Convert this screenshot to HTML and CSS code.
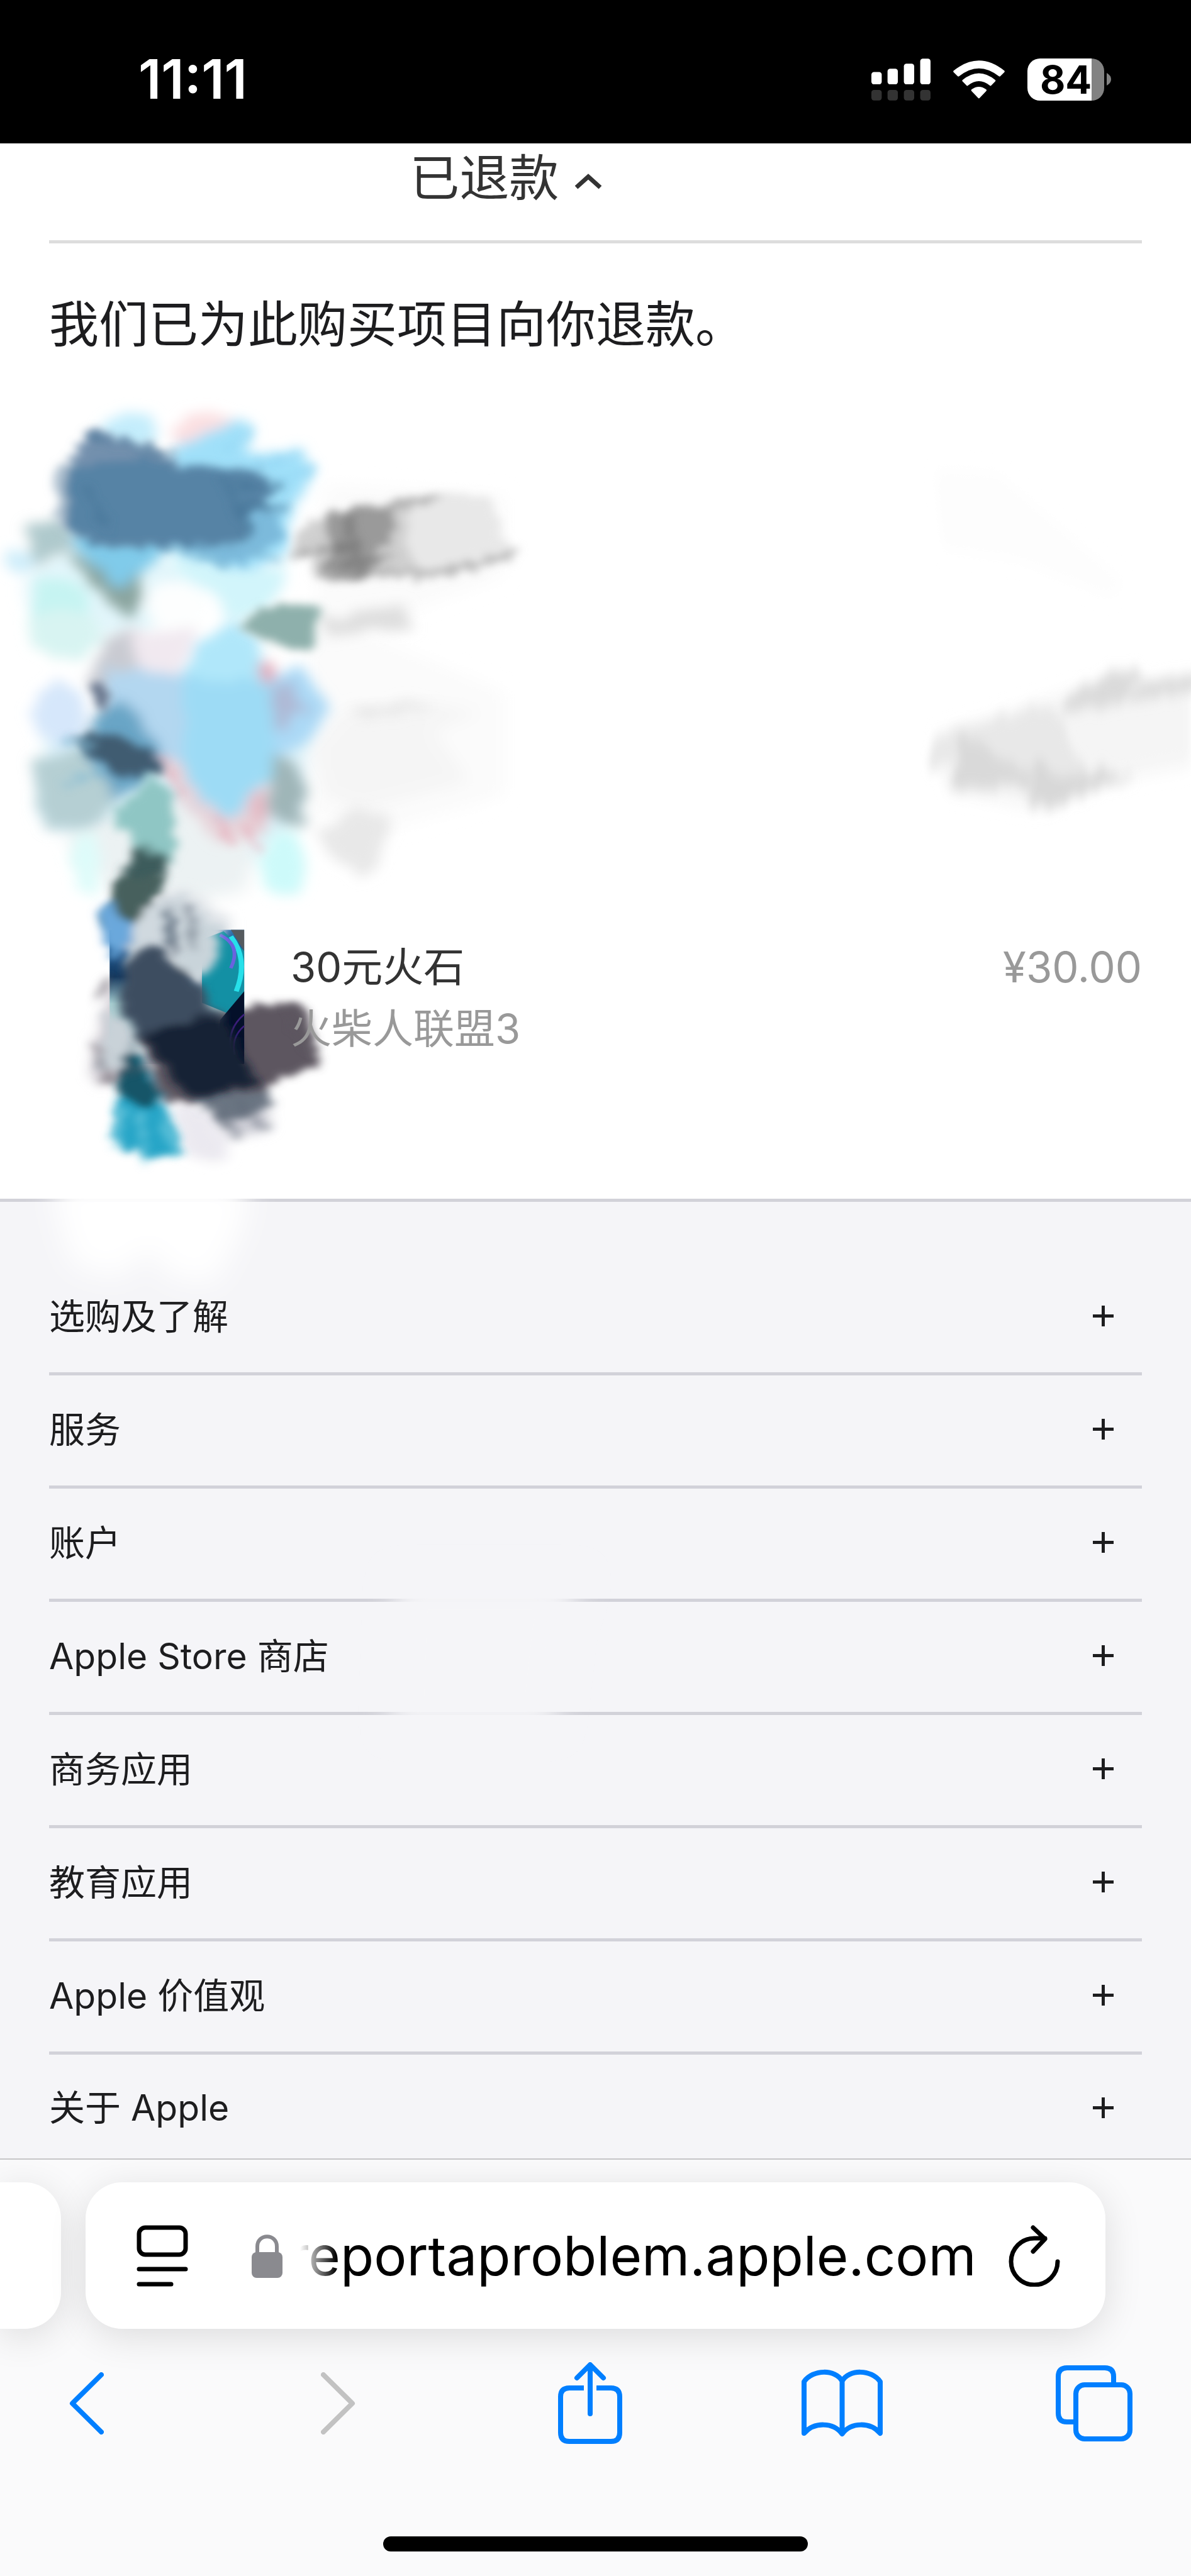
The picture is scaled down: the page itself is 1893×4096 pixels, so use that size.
FILE: index.html
```html
<!DOCTYPE html>
<html lang="zh-CN">
<head>
    <meta charset="UTF-8">
    <meta name="viewport" content="width=device-width, initial-scale=1.0">
    <title>报告问题</title>
    <link rel="stylesheet" href="styles.css">
</head>
<body>
    <header class="status-bar">
        <span class="time">11:11</span>
        <div class="status-icons">
            <svg class="signal" viewBox="122 127 315 223">
                <g fill="#fff">
                    <rect x="122" y="198" width="55" height="66" rx="14"/>
                    <rect x="208" y="181" width="55" height="83" rx="14"/>
                    <rect x="295" y="154" width="55" height="110" rx="14"/>
                    <rect x="382" y="127" width="55" height="137" rx="14"/>
                </g>
                <g fill="#333">
                    <rect x="122" y="294" width="55" height="56" rx="14"/>
                    <rect x="208" y="294" width="55" height="56" rx="14"/>
                    <rect x="295" y="294" width="55" height="56" rx="14"/>
                    <rect x="382" y="294" width="55" height="56" rx="14"/>
                </g>
            </svg>
            <svg class="wifi" viewBox="556 127 273 223" fill="#fff">
                <path d="M558 192Q692 84 827 192Q830 195 827 199L805 221Q802 224 798 221Q692 137 587 221Q583 224 580 221L558 199Q555 195 558 192Z"/>
                <path d="M605 241Q692 169 779 241Q782 245 779 248L757 270Q754 274 750 270Q692 223 634 270Q630 274 627 270L605 248Q602 245 605 241Z"/>
                <path d="M653 291Q692 262 731 291Q735 295 731 299L696 336Q692 341 688 336L653 299Q649 295 653 291Z"/>
            </svg>
            <div class="battery">84</div>
            <svg class="battery-tip" viewBox="0 0 7 20"><path fill="#828282" d="M0 0Q7 4 7 10Q7 16 0 20Z"/></svg>
        </div>
    </header>

    <main class="page">
        <!-- brush strokes over the hidden purchases -->
        <svg class="strokes" viewBox="0 254 2106 2900" aria-hidden="true">
            <defs>
                <filter id="soft" x="-20%" y="-20%" width="140%" height="140%">
                    <feTurbulence type="fractalNoise" baseFrequency="0.02" numOctaves="3" seed="9"/>
                    <feDisplacementMap in="SourceGraphic" scale="50" xChannelSelector="R" yChannelSelector="G"/>
                    <feGaussianBlur stdDeviation="19"/>
                </filter>
                <filter id="rough" x="-20%" y="-20%" width="140%" height="140%">
                    <feTurbulence type="fractalNoise" baseFrequency="0.03 0.04" numOctaves="2" seed="4"/>
                    <feDisplacementMap in="SourceGraphic" scale="55" xChannelSelector="R" yChannelSelector="G"/>
                    <feGaussianBlur stdDeviation="13"/>
                </filter>
                <filter id="haze" x="-30%" y="-30%" width="160%" height="160%"><feGaussianBlur stdDeviation="24"/></filter>
                <linearGradient id="art" x1="0" y1="0" x2="0" y2="1">
                    <stop offset="0" stop-color="#2b6fae"/>
                    <stop offset=".35" stop-color="#13385f"/>
                    <stop offset=".55" stop-color="#a8cfd2"/>
                    <stop offset="1" stop-color="#c9cdd4"/>
                </linearGradient>
            </defs>

            <g transform="translate(0 680) scale(.6378 .6059)">
                <g filter="url(#haze)">
                    <polygon fill="#fbfbfb" points="900,290 1400,320 1400,560 1000,720 1400,900 1400,1200 1080,1300 860,1260 860,800"/>
                    <polygon fill="#f5f5f5" points="960,950 1200,930 1340,960 1200,1010 1300,1160 1000,1240 900,1200 870,1060"/>
                    <ellipse fill="#e2f6fb" cx="300" cy="600" rx="230" ry="140"/>
                    <polygon fill="#d9f0f8" points="130,1000 860,1000 820,1280 700,1400 300,1400 110,1260"/>
                    <polygon fill="#ecf2f3" points="480,1200 720,1300 680,1480 480,1520 350,1500 220,1400 180,1300"/>
                </g>
                <g filter="url(#soft)">
                    <ellipse fill="#c4edfc" cx="365" cy="140" rx="75" ry="55"/>
                    <polygon fill="#fbdfe1" points="480,120 570,80 640,100 560,170 480,180"/>
                    <polygon fill="#a0e0f9" points="460,200 640,105 710,125 680,200 840,200 880,250 820,340 790,500 660,550 470,480"/>
                    <polygon fill="#d2f5fb" points="470,490 650,540 800,530 740,660 640,690 590,600 500,560"/>
                    <ellipse fill="#c6f4f2" cx="165" cy="640" rx="80" ry="75"/>
                    <ellipse fill="#d8f4f2" cx="180" cy="730" rx="100" ry="75"/>
                    <ellipse fill="#d0eefa" cx="50" cy="520" rx="40" ry="35"/>
                    <polygon fill="#afc9cc" points="75,410 190,385 200,470 90,530"/>
                    <polygon fill="#8aa49f" points="180,470 290,540 390,540 395,640 360,675 260,600"/>
                    <polygon fill="#80cbea" points="190,440 490,450 400,540 335,590 270,540"/>
                    <ellipse fill="#fdfefe" cx="490" cy="650" rx="90" ry="80"/>
                    <polygon fill="#c9cbd2" points="290,740 400,720 420,850 280,900 240,880"/>
                    <polygon fill="#f1e9f0" points="370,730 540,720 500,860 390,840"/>
                    <polygon fill="#b0e7fa" points="540,760 650,690 720,740 730,930 500,880"/>
                    <ellipse fill="#d6e7fb" cx="165" cy="960" rx="75" ry="90"/>
                    <polygon fill="#abd9f6" points="740,850 840,830 920,950 830,1060 740,1100"/>
                    <polygon fill="#b5cfd3" points="80,1090 270,1060 340,1200 250,1290 130,1300"/>
                    <polygon fill="#b3d7f0" points="300,830 520,850 520,1150 440,1090 370,1010 280,960"/>
                    <polygon fill="#e7d3d9" points="440,1080 510,1110 740,1180 740,1310 600,1330 500,1210"/>
                    <polygon fill="#9fb5b8" points="730,1050 820,1110 850,1200 840,1290 750,1270"/>
                    <polygon fill="#9ddbf5" points="510,860 760,860 760,1150 700,1180 650,1280 560,1220 510,1110"/>
                    <polygon fill="#69a5c6" points="260,960 340,910 450,1080 400,1180 310,1200 240,1080"/>
                    <ellipse fill="#cdfafa" cx="785" cy="1400" rx="60" ry="90"/>
                    <ellipse fill="#defcfa" cx="240" cy="1400" rx="45" ry="90"/>
                    <ellipse fill="#e2a8b8" cx="740" cy="840" rx="20" ry="24"/>
                    <ellipse fill="#e5b5c0" cx="720" cy="1240" rx="22" ry="50"/>
                    <polygon fill="#afb9d5" points="755,880 800,870 855,950 790,1010 755,980"/>
                    <polygon fill="#dedede" points="880,690 1130,640 1140,710 920,735"/>
                    <polygon fill="#e8e8e8" points="870,1310 1000,1230 1090,1270 1050,1400 1010,1440 930,1390"/>
                    <polygon fill="#e3e3e3" points="960,945 1200,930 1190,945 1000,980"/>
                </g>
                <g filter="url(#rough)">
                    <polygon fill="#7390ad" points="250,130 360,165 480,210 480,290 170,300 200,220"/>
                    <polygon fill="#7bbadb" points="690,365 770,370 790,450 670,530 600,520 500,470 690,450"/>
                    <polygon fill="#aec0cf" points="150,250 200,230 200,430 160,400"/>
                    <polygon fill="#5683a5" points="175,245 400,215 460,240 720,250 770,310 720,350 800,358 690,370 690,450 640,475 280,475 190,430"/>
                    <polygon fill="#8eb0ac" points="660,705 740,645 880,640 885,700 860,780 740,750"/>
                    <polygon fill="#3f5b71" points="200,1040 280,1020 340,1030 445,1090 440,1130 320,1150 265,1090"/>
                    <polygon fill="#66738a" points="250,860 300,900 290,960 260,930"/>
                    <polygon fill="#8fc6c4" points="300,1270 420,1150 475,1180 490,1300 480,1400 380,1340"/>
                    <polygon fill="#3d5c5b" points="380,1340 465,1380 400,1600 290,1580"/>
                    <polygon fill="#e8e8e8" points="1070,350 1240,315 1360,330 1410,480 1210,540 1000,545"/>
                    <polygon fill="#d0d0d0" points="840,400 1150,330 1120,450 1160,540 940,575 850,540 880,500 810,490"/>
                    <polygon fill="#9a9a9a" points="905,375 1090,345 1095,430 1040,500 1050,550 950,580 880,545 910,490"/>
                    <polygon fill="#b9b9b9" points="1040,535 1240,535 1430,480 1420,510 1210,570 1050,560"/>
                    <polygon fill="#ababab" points="1090,340 1240,318 1200,345 1090,370"/>
                </g>
                <g filter="url(#rough)" fill="none" stroke-width="16" opacity=".6">
                    <path stroke="#8fd4f3" d="M620 200L700 130M760 290L880 240M690 240L830 205"/>
                    <path stroke="#3f6f93" d="M660 300H780M680 356H800M240 300L300 420M620 270L700 440M250 145L470 210"/>
                    <path stroke="#6d6d6d" d="M820 495L1000 465M900 540L1100 500M960 380L1000 560"/>
                    <path stroke="#7fb9d4" d="M470 470L640 530M680 480L780 515M170 1040L270 1052M180 1170L300 1120"/>
                    <path stroke="#e7a3b1" d="M600 1250L640 1340M680 1280L720 1370M440 1080L510 1210"/>
                </g>
            </g>

            <g transform="translate(0 1560) scale(.6378 .5102)">
                <g filter="url(#soft)">
                    <polygon fill="#e0e4e8" points="400,60 520,20 620,120 640,200 400,250"/>
                    <polygon fill="#ccc7cf" points="300,340 340,400 420,640 290,700 250,680"/>
                    <polygon fill="#ebe9f0" points="470,740 580,800 640,900 620,980 510,940"/>
                    <polygon fill="#cdced6" points="590,800 730,740 750,850 650,890"/>
                </g>
                <rect fill="url(#art)" x="304" y="167" width="373" height="465"/>
                <g filter="url(#rough)">
                    <polygon fill="#6aa8dc" points="270,90 310,60 390,130 350,230 310,270"/>
                    <polygon fill="#47605d" points="330,-20 450,-20 400,155 310,110"/>
                    <polygon fill="#d0d9df" points="390,100 500,40 620,170 600,290 560,380 440,300 340,300 370,180"/>
                    <polygon fill="#8494a3" points="450,90 490,100 485,250 455,200"/>
                    <polygon fill="#c9d2d8" points="300,440 380,540 360,640 270,660"/>
                    <polygon fill="#27a5c7" points="360,560 430,680 500,940 410,960 310,900"/>
                    <polygon fill="#5d5660" points="390,530 680,430 840,420 885,630 680,750 460,770"/>
                    <polygon fill="#155568" points="360,560 450,740 400,790 310,720"/>
                    <polygon fill="#6a7482" points="520,730 690,730 740,720 760,780 620,840"/>
                </g>
                <polygon fill="#1390a4" points="560,200 620,172 677,240 677,480 560,420"/>
                <polygon fill="#555a5e" points="640,167 677,167 677,240"/>
                <path fill="none" stroke="#27e0ea" stroke-width="14" d="M640 190Q690 270 655 380"/>
                <path fill="none" stroke="#6a62df" stroke-width="10" d="M610 185Q670 220 640 300"/>
                <polygon fill="#04102a" points="677,380 610,480 600,632 677,632"/>
                <path fill="none" stroke="#3c1e7c" stroke-width="5" d="M677 460Q630 510 640 580M677 500Q640 540 650 600"/>
                <g filter="url(#rough)">
                    <polygon fill="#c9d4da" points="500,120 600,160 610,250 560,330 500,300"/>
                    <polygon fill="#3e4d60" points="420,215 500,300 560,370 620,480 390,550 330,440 345,290"/>
                    <polygon fill="#172035" points="390,530 590,460 630,500 710,700 600,740 520,740"/>
                </g>
                <g filter="url(#rough)" fill="none" stroke-width="16" opacity=".6">
                    <path stroke="#5d5660" d="M270 690L420 640M270 420L300 330M800 430L870 600M260 560L310 700"/>
                    <path stroke="#5b6573" d="M640 740L740 860M600 800L660 890M470 80L480 260M520 60L540 240"/>
                    <path stroke="#79cfe2" d="M340 780L320 930M390 800L400 990M450 820L490 960"/>
                </g>
            </g>

            <g transform="translate(1550 780) scale(.3546 .6378)">
                <g filter="url(#haze)">
                    <polygon fill="#fdfdfd" points="290,80 600,90 1250,400 1150,430 700,330 330,300"/>
                    <polygon fill="#f5f5f5" points="280,820 1000,690 1568,660 1568,900 1100,950 800,1020 350,970"/>
                </g>
                <g filter="url(#soft)">
                    <polygon fill="#e8e8e8" points="270,850 400,800 860,730 940,800 1050,930 920,1010 780,1020 700,960 360,970 400,890 260,915"/>
                    <polygon fill="#d9d9d9" points="410,810 500,830 780,930 760,960 370,965 410,900"/>
                    <polygon fill="#dadada" points="910,740 1030,680 1170,640 1340,640 1240,700 1390,665 1600,650 1600,690 1400,710 930,755"/>
                    <polygon fill="#d8d8d8" points="790,880 930,930 1120,910 1300,930 1150,955 920,1015 770,1010"/>
                </g>
            </g>

            <g filter="url(#haze)">
                <polygon fill="#fff" points="90,2090 440,2090 430,2170 380,2270 300,2260 265,2210 210,2260 130,2240 110,2180"/>
                <polygon fill="#f5f5f8" points="700,2790 1030,2790 1000,2880 980,3060 690,3060"/>
            </g>
        </svg>

        <section class="purchase">
            <button class="refund-toggle" type="button">已退款
                <svg viewBox="0 0 46 26"><path d="M4 22L23 5L42 22"/></svg>
            </button>
            <p class="refund-note">我们已为此购买项目向你退款。</p>
            <div class="item">
                <div class="item-text">
                    <p class="item-name">30元火石</p>
                    <p class="item-app">火柴人联盟3</p>
                </div>
                <p class="item-price">¥30.00</p>
            </div>
        </section>

        <nav class="directory">
            <button type="button">选购及了解<i></i></button>
            <button type="button">服务<i></i></button>
            <button type="button">账户<i></i></button>
            <button type="button">Apple Store 商店<i></i></button>
            <button type="button">商务应用<i></i></button>
            <button type="button">教育应用<i></i></button>
            <button type="button">Apple 价值观<i></i></button>
            <button type="button">关于 Apple<i></i></button>
        </nav>
    </main>

    <footer class="browser-bar">
        <div class="tabs">
            <div class="prev-tab"></div>
            <div class="address">
                <button class="reader" type="button" aria-label="阅读器">
                    <svg viewBox="0 0 82 98"><rect x="4" y="4" width="74" height="43" rx="10"/><path d="M4 70H78M4 94H55"/></svg>
                </button>
                <svg class="lock" viewBox="0 0 49 70"><path d="M9 32V20C9 -1 40 -1 40 20V32" fill="none" stroke="#8a8a8f" stroke-width="6"/><rect y="29" width="49" height="41" rx="8" fill="#8a8a8f"/></svg>
                <input type="text" value="reportaproblem.apple.com" aria-label="网址">
                <button class="reload" type="button" aria-label="重新载入">
                    <svg viewBox="0 0 82 98"><path d="M78 58A37 37 0 1 1 41 21H58M39 4L58 22L39 42"/></svg>
                </button>
            </div>
        </div>
        <div class="toolbar">
            <button type="button" aria-label="后退"><svg class="chevron" viewBox="0 0 55 99"><path d="M51 4L5 49.500L51 95"/></svg></button>
            <button type="button" aria-label="前进" disabled><svg class="chevron" viewBox="0 0 55 99"><path d="M4 4L50 49.500L4 95"/></svg></button>
            <button type="button" aria-label="共享"><svg class="share" viewBox="0 0 102 130"><path d="M41 41H18Q4 41 4 55V112Q4 126 18 126H84Q98 126 98 112V55Q98 41 84 41H61"/><path stroke-linecap="round" d="M51 82V5M30 25L51 4L72 25"/></svg></button>
            <button type="button" aria-label="书签"><svg class="book" viewBox="0 0 129 108"><path d="M64.500 19C54 0 18 0 4 20V102C20 84 50 84 64.500 103C79 84 109 84 125 102V20C111 0 75 0 64.500 19V103"/></svg></button>
            <button type="button" aria-label="标签页"><svg class="copies" viewBox="0 0 122 121"><path d="M92 28V18Q92 4 78 4H18Q4 4 4 18V76Q4 90 18 90H30"/><rect x="32" y="31" width="86" height="86" rx="14"/></svg></button>
        </div>
        <div class="home-indicator"></div>
    </footer>
</body>
</html>
```
FILE: styles.css
```css
* {
    box-sizing: border-box;
}
body {
    margin: 0;
    min-height: 100vh;
    display: flex;
    flex-direction: column;
    background: #fff;
    color: #1d1d1f;
    font-family: Inter, "Noto Sans CJK SC", sans-serif;
}
p {
    margin: 0;
}
button {
    padding: 0;
    border: none;
    background: none;
    color: inherit;
    font: inherit;
    cursor: pointer;
}
svg {
    display: block;
}

/* status bar */
.status-bar {
    display: flex;
    justify-content: space-between;
    align-items: center;
    height: 228px;
    padding: 24px 127px 0 220px;
    background: #000;
    color: #fff;
}
.time {
    font-size: 86px;
    font-weight: 600;
}
.status-icons {
    display: flex;
    align-items: center;
}
.signal {
    width: 94px;
    height: 67px;
}
.wifi {
    width: 82px;
    height: 67px;
    margin: 0 36px;
}
.battery {
    width: 122px;
    height: 67px;
    padding-left: 20px;
    border-radius: 20px;
    background: linear-gradient(to right, #fff 84%, #828282 84%);
    color: #000;
    font-size: 62px;
    font-weight: 700;
    line-height: 67px;
}
.battery-tip {
    width: 7px;
    height: 20px;
    margin-left: 4px;
}

/* page */
.page {
    position: relative;
    flex: 1;
    display: flex;
    flex-direction: column;
}
.strokes {
    position: absolute;
    top: 0;
    left: 0;
    width: 100%;
}
.purchase {
    padding: 0 78px 214px;
}
.refund-toggle {
    display: flex;
    align-items: center;
    gap: 24px;
    width: 100%;
    padding: 8px 0 52px 33%;
    border-bottom: 5px solid #ddd;
    color: #333;
    font-size: 79px;
    line-height: 94px;
}
.refund-toggle svg {
    width: 46px;
    height: 26px;
    margin-top: 12px;
    fill: none;
    stroke: #333;
    stroke-width: 7;
}
.refund-note {
    margin-top: 82px;
    font-size: 79px;
    line-height: 94px;
}
.item {
    position: relative;
    display: flex;
    justify-content: space-between;
    margin-top: 926px;
    padding-left: 384px;
    padding-bottom: 7px;
    font-size: 65px;
    line-height: 98px;
}
.item-name {
    color: #333;
}
.item-app,
.item-price {
    color: #999;
}
.item-price {
    font-size: 67px;
}
.directory {
    flex: 1;
    padding: 96px 78px 0;
    border-top: 5px solid #d2d2d9;
    background: #f5f5f8;
}
.directory button {
    display: flex;
    justify-content: space-between;
    align-items: center;
    width: 100%;
    height: 180px;
    padding: 0 45px 12px 0;
    border-bottom: 5px solid #d2d2d9;
    font-size: 57px;
}
.directory button:last-child {
    height: 164px;
    padding-bottom: 4px;
    border-bottom: none;
}
.directory i {
    width: 33px;
    height: 33px;
    margin-top: 8px;
    background:
        linear-gradient(#1d1d1f, #1d1d1f) center / 33px 5px no-repeat,
        linear-gradient(#1d1d1f, #1d1d1f) center / 5px 33px no-repeat;
}

/* browser bar */
.browser-bar {
    height: 664px;
    border-top: 2px solid #c6c6c8;
    background: #fafafb;
}
.tabs {
    display: flex;
    gap: 39px;
    height: 269px;
    padding: 36px 136px 0 0;
}
.prev-tab,
.address {
    background: #fff;
    box-shadow: 0 12px 60px rgba(0, 0, 0, 0.12);
}
.prev-tab {
    flex: none;
    width: 97px;
    border-radius: 0 58px 58px 0;
}
.address {
    flex: 1;
    min-width: 0;
    display: flex;
    align-items: center;
    padding: 0 72px 0 81px;
    border-radius: 58px;
}
.reader svg,
.reload svg {
    width: 82px;
    height: 98px;
    fill: none;
    stroke: #000;
    stroke-width: 7;
    stroke-linecap: round;
    stroke-linejoin: round;
}
.lock {
    flex: none;
    width: 49px;
    height: 70px;
    margin-left: 101px;
}
.address input {
    flex: 1;
    min-width: 0;
    margin: 0 40px 0 10px;
    padding: 0;
    border: none;
    outline: none;
    background: none;
    color: #000;
    font: 87px Inter, sans-serif;
    -webkit-mask-image: linear-gradient(to right, transparent 18px, #000 76px);
    mask-image: linear-gradient(to right, transparent 18px, #000 76px);
}
.toolbar {
    display: flex;
    justify-content: space-between;
    align-items: center;
    height: 236px;
    padding: 0 89px 0 72px;
}
.toolbar button {
    display: flex;
    justify-content: center;
    width: 130px;
}
.toolbar svg {
    fill: none;
    stroke: #007fff;
    stroke-width: 8;
    stroke-linejoin: round;
}
.toolbar button:disabled svg {
    stroke: #c2c2c2;
}
.toolbar .chevron {
    width: 55px;
    height: 99px;
    stroke-linecap: round;
}
.share {
    width: 102px;
    height: 130px;
}
.book {
    width: 129px;
    height: 108px;
}
.copies {
    width: 122px;
    height: 121px;
}
.home-indicator {
    width: 675px;
    height: 24px;
    margin: 94px auto 0;
    border-radius: 12px;
    background: #000;
}
```
